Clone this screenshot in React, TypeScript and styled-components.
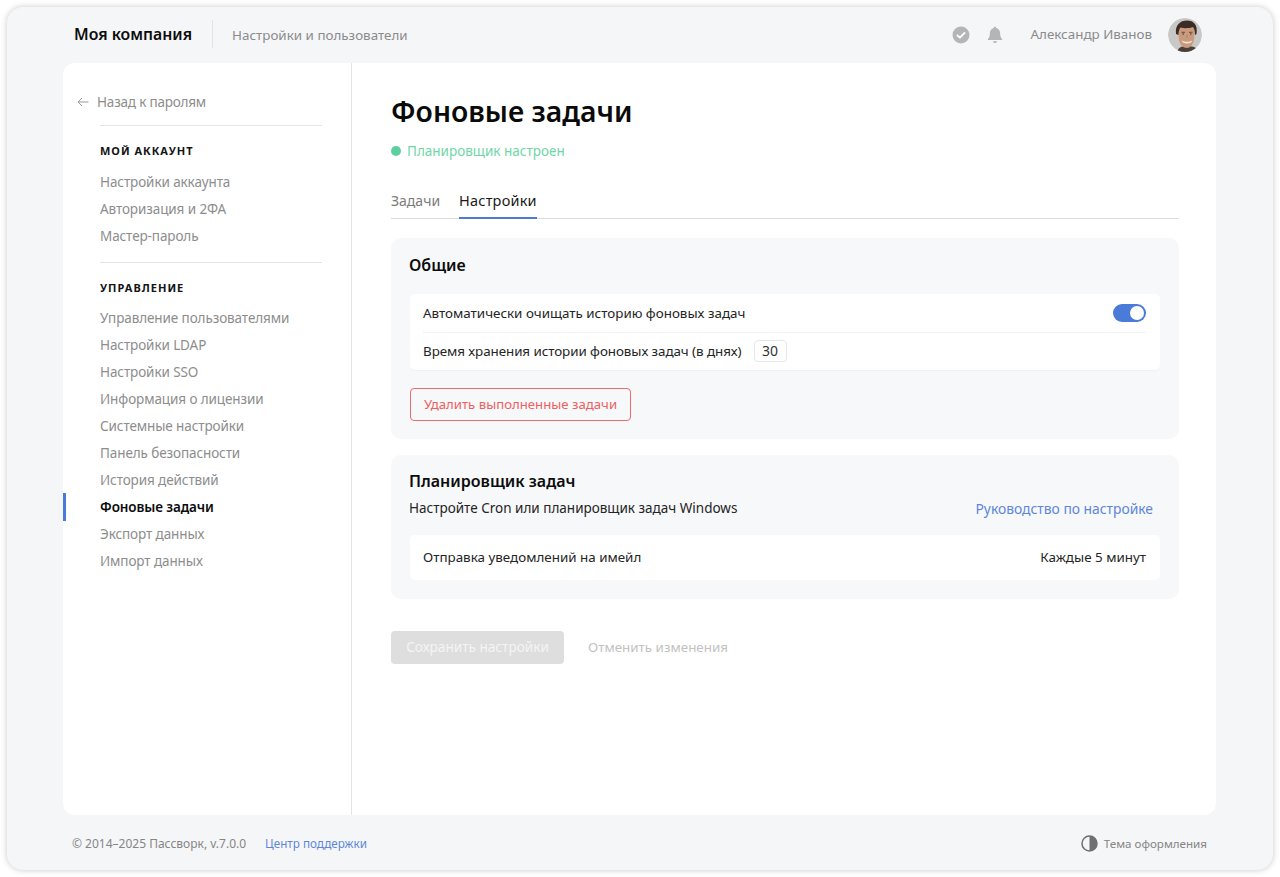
import styled, { createGlobalStyle } from "styled-components";

const GlobalStyle = createGlobalStyle`
  html, body {
    margin: 0;
    padding: 0;
    background: #ffffff;
  }
  body {
    font-family: "Noto Sans", "Open Sans", sans-serif;
    color: #101010;
  }
  * {
    box-sizing: border-box;
  }
`;

const accountLinks = ["Настройки аккаунта", "Авторизация и 2ФА", "Мастер-пароль"];
const manageLinks = [
  "Управление пользователями",
  "Настройки LDAP",
  "Настройки SSO",
  "Информация о лицензии",
  "Системные настройки",
  "Панель безопасности",
  "История действий",
  "Фоновые задачи",
  "Экспорт данных",
  "Импорт данных",
];

const Avatar = () => (
  <AvatarSvg viewBox="0 0 34 34">
    <circle cx="17" cy="17" r="17" fill="#c8c8c6" />
    <path d="M9 34c1-4 4-6 10-6s11 2 12 6z" fill="#4b3f36" />
    <path d="M10 12c0-5 4-7 9-7s8 3 8 8l-1 9c-1 5-4 8-7 8-4 0-7-3-8-8z" fill="#c99a7c" />
    <path d="M8 16C7 7 12 2.500 19 2.500S30 7 28.500 16l-1.500 1c0-4-.5-6-2-8-4 1.500-9 1.500-12.500.5-1.500 2-2 4-2 7.500z" fill="#3b2d25" />
    <path d="M13.500 14.300h3.500M21 14.300h3.500" stroke="#5a4436" strokeWidth="0.900" />
    <path d="M14.500 16h1.500M22 16h1.500" stroke="#3a2c24" strokeWidth="1" />
    <path d="M13.500 22.500c3 1.800 8 1.800 11 0-1 4-10 4-11 0z" fill="#efe6dc" />
    <path d="M19 17v3" stroke="#ad8064" strokeWidth="0.800" />
  </AvatarSvg>
);

const App = () => {
  return (
    <>
      <GlobalStyle />
      <Page>
        <Window>
          <Header>
            <HeaderLeft>
              <Company>Моя компания</Company>
              <HeaderTitle>Настройки и пользователи</HeaderTitle>
            </HeaderLeft>
            <HeaderRight>
              <IconSlot>
                <svg width="18" height="18" viewBox="0 0 18 18">
                  <circle cx="9" cy="9" r="8.500" fill="#b4b5b6" />
                  <path d="M5.400 9.300l2.500 2.400 4.700-4.800" fill="none" stroke="#fff" strokeWidth="1.800" strokeLinecap="round" strokeLinejoin="round" />
                </svg>
                <svg width="18" height="18" viewBox="0 0 18 18">
                  <path d="M9 .8c.7 0 1.200.5 1.200 1.100 2.600.6 3.900 2.700 3.900 5.300 0 3 .7 4.500 2 5.900.3.4.1 1-.5 1H2.400c-.6 0-.8-.6-.5-1 1.300-1.400 2-2.900 2-5.900 0-2.600 1.300-4.700 3.900-5.300C7.800 1.300 8.300.8 9 .8z" fill="#b4b5b6" />
                  <path d="M6.900 15.300h4.200c-.2 1.100-1 1.800-2.100 1.800s-1.900-.7-2.100-1.800z" fill="#b4b5b6" />
                </svg>
              </IconSlot>
              <UserName>Александр Иванов</UserName>
              <Avatar />
            </HeaderRight>
          </Header>

          <Content>
            <Sidebar>
              <BackLink>
                <svg width="12" height="10" viewBox="0 0 12 10">
                  <path d="M11.500 5H1M5 1L1 5l4 4" fill="none" stroke="#9a9a9a" strokeWidth="1" />
                </svg>
                Назад к паролям
              </BackLink>
              <Divider />
              <NavHeading>Мой аккаунт</NavHeading>
              <NavList>
                {accountLinks.map((l) => (
                  <NavItem key={l}>{l}</NavItem>
                ))}
              </NavList>
              <Divider $top={13} />
              <NavHeading $bottom={8}>Управление</NavHeading>
              <NavList>
                {manageLinks.map((l) => (
                  <NavItem key={l} $active={l === "Фоновые задачи"}>
                    {l}
                  </NavItem>
                ))}
              </NavList>
            </Sidebar>

            <Main>
              <Title>Фоновые задачи</Title>
              <Status>
                <StatusDot />
                Планировщик настроен
              </Status>
              <Tabs>
                <Tab>Задачи</Tab>
                <Tab $active>Настройки</Tab>
              </Tabs>

              <Card $height={201} $top={15}>
                <CardTitle>Общие</CardTitle>
                <Panel>
                  <Row>
                    <span>Автоматически очищать историю фоновых задач</span>
                    <Toggle />
                  </Row>
                  <RowSeparator />
                  <Row $start>
                    <span>Время хранения истории фоновых задач (в днях)</span>
                    <NumberBox>30</NumberBox>
                  </Row>
                </Panel>
                <DangerButton>Удалить выполненные задачи</DangerButton>
              </Card>

              <Card $height={144} $top={14}>
                <CardTitle>Планировщик задач</CardTitle>
                <SubRow>
                  <span>Настройте Cron или планировщик задач Windows</span>
                  <GuideLink>Руководство по настройке</GuideLink>
                </SubRow>
                <SinglePanel>
                  <span>Отправка уведомлений на имейл</span>
                  <span>Каждые 5 минут</span>
                </SinglePanel>
              </Card>

              <Actions>
                <SaveButton>Сохранить настройки</SaveButton>
                <CancelText>Отменить изменения</CancelText>
              </Actions>
            </Main>
          </Content>

          <Footer>
            <FooterLeft>
              <span>© 2014–2025 Пассворк, v.7.0.0</span>
              <SupportLink>Центр поддержки</SupportLink>
            </FooterLeft>
            <ThemeSwitch>
              <svg width="17" height="17" viewBox="0 0 17 17">
                <circle cx="8.500" cy="8.500" r="7.500" fill="none" stroke="#6f7072" strokeWidth="1.500" />
                <path d="M8.500 1a7.500 7.500 0 0 1 0 15z" fill="#6f7072" />
              </svg>
              Тема оформления
            </ThemeSwitch>
          </Footer>
        </Window>
      </Page>
    </>
  );
};

const Page = styled.div`
  width: 1280px;
  height: 877px;
  padding: 7px;
  overflow: hidden;
`;

const Window = styled.div`
  width: 1266px;
  height: 863px;
  display: flex;
  flex-direction: column;
  background: #f5f6f8;
  border-radius: 16px;
  box-shadow: 0 0 6px rgba(0, 0, 0, 0.22);
`;

const Header = styled.header`
  height: 56px;
  flex: none;
  display: flex;
  align-items: center;
  justify-content: space-between;
  padding: 0 71px 0 67px;
`;

const HeaderLeft = styled.div`
  display: flex;
  align-items: center;
  padding-bottom: 2px;
`;

const Company = styled.div`
  font-size: 15.800px;
  font-weight: 600;
  color: #0c0c0c;
  padding-right: 20px;
  height: 28px;
  line-height: 28px;
  border-right: 1px solid #e3e4e6;
`;

const HeaderTitle = styled.div`
  font-size: 13.400px;
  color: #8b8b8b;
  padding: 2px 0 0 19px;
`;

const HeaderRight = styled.div`
  display: flex;
  align-items: center;
`;

const IconSlot = styled.div`
  display: flex;
  align-items: center;
  gap: 16px;
  margin-right: 27px;
`;

const UserName = styled.div`
  font-size: 13.400px;
  color: #8b8b8b;
  margin-right: 16px;
  padding-bottom: 2px;
`;

const AvatarSvg = styled.svg`
  width: 34px;
  height: 34px;
  display: block;
  border-radius: 50%;
  filter: blur(0.4px);
`;

const Content = styled.div`
  flex: none;
  height: 752px;
  margin: 0 57px 0 56px;
  display: flex;
  background: #ffffff;
  border-radius: 12px;
`;

const Sidebar = styled.aside`
  width: 289px;
  flex: none;
  padding: 27px 29px 0 37px;
  border-right: 1px solid #e3e4e6;
`;

const BackLink = styled.div`
  display: flex;
  align-items: center;
  gap: 8px;
  height: 24px;
  margin-left: -23px;
  font-size: 13.500px;
  letter-spacing: -0.2px;
  color: #8d8d8d;
`;

const Divider = styled.div<{ $top?: number }>`
  height: 1px;
  background: #e3e4e6;
  margin-top: ${(p) => p.$top ?? 11}px;
`;

const NavHeading = styled.div<{ $bottom?: number }>`
  margin: 17px 0 ${(p) => p.$bottom ?? 9}px;
  height: 16px;
  line-height: 16px;
  font-size: 11px;
  font-weight: 700;
  letter-spacing: 1px;
  text-transform: uppercase;
  color: #141414;
`;

const NavList = styled.div`
  display: flex;
  flex-direction: column;
`;

const NavItem = styled.div<{ $active?: boolean }>`
  position: relative;
  height: 27px;
  line-height: 29px;
  font-size: 13.500px;
  letter-spacing: -0.1px;
  font-weight: ${(p) => (p.$active ? 600 : 400)};
  color: ${(p) => (p.$active ? "#0c0c0c" : "#8d8d8d")};

  &::before {
    content: "";
    display: ${(p) => (p.$active ? "block" : "none")};
    position: absolute;
    left: -37px;
    top: 0;
    width: 3px;
    height: 28px;
    background: #4a7bd8;
  }
`;

const Main = styled.main`
  flex: 1;
  min-width: 0;
  padding: 27px 37px 0 39px;
`;

const Title = styled.h1`
  margin: 0;
  height: 42px;
  line-height: 42px;
  font-size: 28.300px;
  font-weight: 600;
  color: #0a0a0a;
`;

const Status = styled.div`
  display: flex;
  align-items: center;
  gap: 6px;
  margin-top: 7px;
  height: 24px;
  font-size: 13.500px;
  color: #6fd6a8;
`;

const StatusDot = styled.span`
  width: 10px;
  height: 10px;
  border-radius: 50%;
  background: #5dd0a0;
`;

const Tabs = styled.div`
  display: flex;
  gap: 19px;
  margin-top: 24px;
  height: 32px;
  border-bottom: 1px solid #dcdddf;
`;

const Tab = styled.div<{ $active?: boolean }>`
  height: 32px;
  line-height: 27px;
  font-size: ${(p) => (p.$active ? "14.500px" : "14px")};
  letter-spacing: ${(p) => (p.$active ? "0.2px" : "0")};
  color: ${(p) => (p.$active ? "#1a1a1a" : "#7c7c7c")};
  border-bottom: 2px solid ${(p) => (p.$active ? "#4a7bd8" : "transparent")};
`;

const Card = styled.section<{ $height: number; $top: number }>`
  height: ${(p) => p.$height}px;
  margin-top: 16px;
  padding: ${(p) => p.$top}px 19px 0 19px;
  background: #f7f8fa;
  border-radius: 10px;

  &:first-of-type {
    margin-top: 19px;
  }
`;

const CardTitle = styled.h2`
  margin: 0 0 0 -1px;
  height: 24px;
  line-height: 24px;
  font-size: 16px;
  font-weight: 600;
  color: #0c0c0c;
`;

const Panel = styled.div`
  margin-top: 17px;
  height: 76px;
  padding: 0 14px 0 13px;
  background: #ffffff;
  border-radius: 5px;
  box-shadow: 0 1px 1px rgba(0, 0, 0, 0.03);
`;

const Row = styled.div<{ $start?: boolean }>`
  height: 38px;
  display: flex;
  align-items: center;
  justify-content: ${(p) => (p.$start ? "flex-start" : "space-between")};
  gap: 12px;
  font-size: 13.400px;
  letter-spacing: ${(p) => (p.$start ? "-0.07px" : "0")};
  color: #242424;
`;

const RowSeparator = styled.div`
  height: 1px;
  margin-bottom: -1px;
  background: #f1f2f4;
`;

const Toggle = styled.span`
  position: relative;
  width: 33px;
  height: 18px;
  border-radius: 9px;
  background: #4a7bd8;

  &::after {
    content: "";
    position: absolute;
    right: 2px;
    top: 2px;
    width: 14px;
    height: 14px;
    border-radius: 50%;
    background: #ffffff;
  }
`;

const NumberBox = styled.span`
  width: 33px;
  height: 22px;
  line-height: 20px;
  text-align: center;
  font-size: 14px;
  letter-spacing: 0;
  color: #333333;
  background: #ffffff;
  border: 1px solid #e6e7e9;
  border-radius: 4px;
`;

const DangerButton = styled.button`
  display: block;
  margin-top: 18px;
  width: 221px;
  height: 33px;
  padding: 0 0 2px;
  font-family: inherit;
  font-size: 13.200px;
  color: #ee5f5f;
  background: transparent;
  border: 1px solid #ec6b6b;
  border-radius: 4px;
`;

const SubRow = styled.div`
  display: flex;
  justify-content: space-between;
  align-items: center;
  height: 22px;
  margin: 4px 0 0 -1px;
  padding-right: 7px;
  font-size: 13.500px;
  color: #242424;
`;

const GuideLink = styled.span`
  font-size: 13.850px;
  color: #5e86d8;
`;

const SinglePanel = styled.div`
  display: flex;
  justify-content: space-between;
  align-items: center;
  margin-top: 16px;
  height: 45px;
  padding: 0 14px 2px 13px;
  font-size: 13.400px;
  color: #242424;
  background: #ffffff;
  border-radius: 5px;
`;

const Actions = styled.div`
  display: flex;
  align-items: center;
  gap: 24px;
  margin-top: 32px;
`;

const SaveButton = styled.button`
  width: 173px;
  height: 33px;
  padding: 0 0 2px;
  font-family: inherit;
  font-size: 13.600px;
  color: #f4f4f4;
  background: #dedede;
  border: none;
  border-radius: 4px;
`;

const CancelText = styled.span`
  font-size: 13.400px;
  color: #c2c2c2;
  padding-bottom: 2px;
`;

const Footer = styled.footer`
  flex: 1;
  display: flex;
  align-items: center;
  justify-content: space-between;
  padding: 2px 66px 0 65px;
  font-size: 12px;
  color: #858585;
`;

const FooterLeft = styled.div`
  display: flex;
  gap: 19px;
`;

const SupportLink = styled.span`
  font-size: 11.700px;
  line-height: 16px;
  color: #5e86d8;
`;

const ThemeSwitch = styled.div`
  display: flex;
  align-items: center;
  gap: 6px;
  font-size: 11.600px;
  padding-bottom: 1px;
`;

export default App;
